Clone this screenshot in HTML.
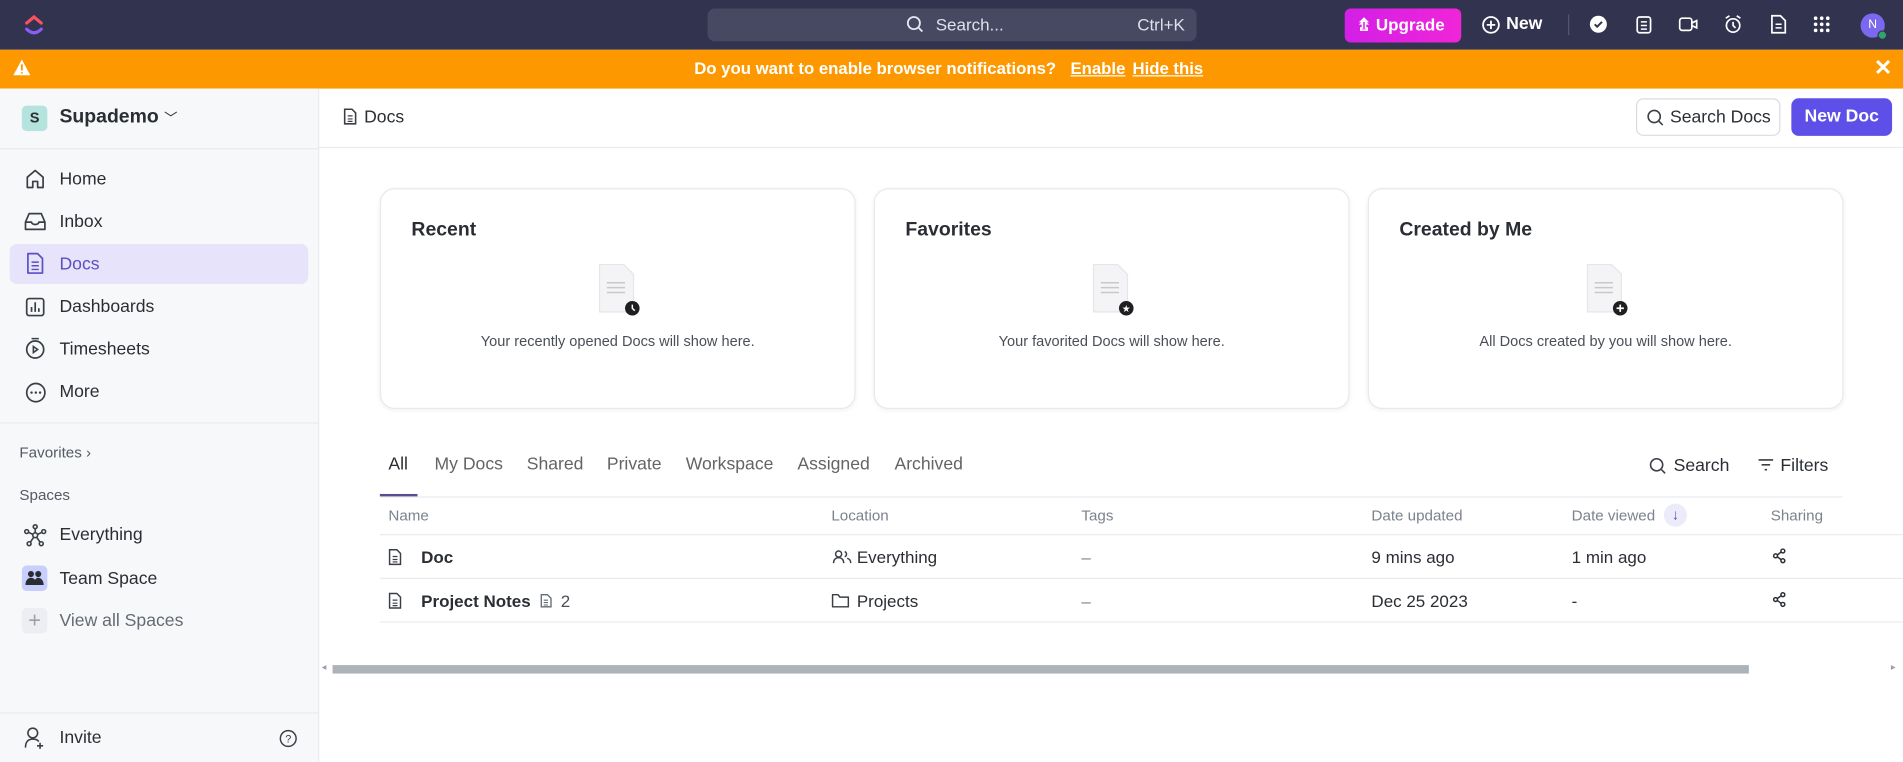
<!DOCTYPE html>
<html><head><meta charset="utf-8"><style>
html,body{margin:0;padding:0;width:1903px;height:762px;overflow:hidden;background:#fff}
#s{position:absolute;left:0;top:0;width:1568px;height:628px;transform:scale(1.21365);transform-origin:0 0;font-family:"Liberation Sans",sans-serif;color:#2a2e34}
.a{position:absolute;white-space:nowrap}
svg{position:absolute;overflow:visible}
.nav{font-size:14.5px;color:#2a2e34}
.tab{font-size:14.5px;color:#646464;top:375px}
.th{font-size:12.5px;color:#7c828d;top:418px}
.td{font-size:14px;color:#2a2e34}
.card{position:absolute;top:155px;width:390px;height:180px;border:1px solid #e8e9ed;border-radius:12px;box-shadow:0 1px 4px rgba(0,0,0,.06);background:#fff}
.card .t{position:absolute;left:25px;top:25px;font-size:16px;font-weight:bold;color:#2a2e34}
.card .d{position:absolute;left:0;right:0;top:118px;text-align:center;font-size:12px;color:#4a4f57}
.hl{position:absolute;height:1px;background:#e9ebf0}
</style></head><body><div id="s">
<div class="a" style="left:0;top:0;width:1568px;height:41px;background:#32334f"></div>
<svg style="left:20px;top:11px" width="16" height="20" viewBox="0 0 16 20"><path d="M2 8 L8 3 L14 8" stroke="#f7525f" stroke-width="2.6" fill="none" stroke-linecap="round"/><path d="M2 13 Q8 19 14 13" stroke="#8b5cf6" stroke-width="2.6" fill="none" stroke-linecap="round"/></svg>
<div class="a" style="left:583px;top:7px;width:403px;height:27px;background:#474862;border-radius:6px"></div>
<svg style="left:747px;top:13px" width="14" height="14"><circle cx="6" cy="6" r="5" stroke="#e6e6ee" stroke-width="1.5" fill="none"/><path d="M10 10 L13 13" stroke="#e6e6ee" stroke-width="1.5"/></svg>
<div class="a" style="left:771px;top:12px;font-size:14px;color:#e0e0ea">Search...</div>
<div class="a" style="left:937px;top:12px;font-size:14px;color:#e0e0ea">Ctrl+K</div>
<div class="a" style="left:1108px;top:7px;width:96px;height:28px;background:linear-gradient(90deg,#d31fe6,#f025d8);border-radius:5px"></div>
<div class="a" style="left:1118px;top:12px;font-size:14px;color:#fff;font-weight:bold">⇯ Upgrade</div>
<svg style="left:1221px;top:13px" width="15" height="15"><circle cx="7.5" cy="7.5" r="6.5" stroke="#fff" stroke-width="1.5" fill="none"/><path d="M7.5 4v7M4 7.5h7" stroke="#fff" stroke-width="1.5"/></svg>
<div class="a" style="left:1241px;top:12px;font-size:14.5px;color:#fff;font-weight:bold">New</div>
<div class="a" style="left:1292px;top:12px;width:1px;height:17px;background:#55576f"></div>
<svg style="left:1310px;top:13px" width="15" height="15"><circle cx="7" cy="7" r="7" fill="#fff"/><path d="M4 7l2 2 4-4" stroke="#32334f" stroke-width="1.6" fill="none"/></svg>
<svg style="left:1348px;top:12px" width="13" height="16"><rect x="1" y="2" width="11" height="13" rx="2" stroke="#fff" stroke-width="1.4" fill="none"/><path d="M4 6h5M4 9h5M4 12h5" stroke="#fff" stroke-width="1.2"/></svg>
<svg style="left:1383px;top:14px" width="16" height="12"><rect x="1" y="1" width="10" height="10" rx="2" stroke="#fff" stroke-width="1.4" fill="none"/><path d="M11 5l4-2v6l-4-2" stroke="#fff" stroke-width="1.4" fill="none"/></svg>
<svg style="left:1420px;top:12px" width="16" height="16"><circle cx="8" cy="9" r="5.5" stroke="#fff" stroke-width="1.4" fill="none"/><path d="M8 6v3l2 2M2 3l3-2M14 3l-3-2" stroke="#fff" stroke-width="1.4" fill="none"/></svg>
<svg style="left:1459px;top:12px" width="13" height="16"><path d="M1 1h7l4 4v10H1z" stroke="#fff" stroke-width="1.4" fill="none"/><path d="M4 8h5M4 11h5" stroke="#fff" stroke-width="1.2"/></svg>
<svg style="left:1494px;top:13px" width="14" height="14" fill="#fff"><circle cx="2" cy="2" r="1.5"/><circle cx="7" cy="2" r="1.5"/><circle cx="12" cy="2" r="1.5"/><circle cx="2" cy="7" r="1.5"/><circle cx="7" cy="7" r="1.5"/><circle cx="12" cy="7" r="1.5"/><circle cx="2" cy="12" r="1.5"/><circle cx="7" cy="12" r="1.5"/><circle cx="12" cy="12" r="1.5"/></svg>
<div class="a" style="left:1533px;top:11px;width:20px;height:20px;border-radius:50%;background:#7b68ee;color:#fff;font-size:10px;text-align:center;line-height:20px">N</div>
<div class="a" style="left:1547px;top:25px;width:6px;height:6px;border-radius:50%;background:#2ea56a;border:1px solid #32334f"></div>
<div class="a" style="left:0;top:41px;width:1568px;height:32px;background:#fd9800"></div>
<svg style="left:11px;top:49px" width="14" height="13"><path d="M7 0L14 13H0z" fill="#fff"/><path d="M7 4v5M7 10.5v1.2" stroke="#fd9800" stroke-width="1.6"/></svg>
<div class="a" style="left:572px;top:49px;font-size:13.8px;color:#fff;font-weight:bold">Do you want to enable browser notifications? <span style="margin-left:8px;text-decoration:underline">Enable</span> <span style="margin-left:2px;text-decoration:underline">Hide this</span></div>
<div class="a" style="left:1544px;top:46px;font-size:18px;color:#fff;font-weight:bold">✕</div>
<div class="a" style="left:0;top:73px;width:262px;height:555px;background:#f7f8f9;border-right:1px solid #e9ebf0"></div>
<div class="hl" style="left:0;top:122px;width:262px"></div>
<div class="a" style="left:18px;top:87px;width:21px;height:21px;background:#b5e3dd;border-radius:4px;font-size:12px;font-weight:bold;text-align:center;line-height:21px;color:#2a2e34">S</div>
<div class="a" style="left:49px;top:88px;font-size:16px;font-weight:bold">Supademo <span style="font-size:11px;font-weight:normal">﹀</span></div>
<div class="a" style="left:8px;top:201px;width:246px;height:33px;background:#e6e3fb;border-radius:6px"></div>
<svg style="left:21px;top:139px" width="16" height="17"><path d="M1.5 7L8 1.5 14.5 7v8.5h-4.5v-5h-4v5H1.5z" stroke="#3a3e46" stroke-width="1.4" fill="none" stroke-linejoin="round"/></svg>
<div class="a nav" style="left:49px;top:140px">Home</div>
<svg style="left:20px;top:175px" width="18" height="15"><path d="M1 8l3-7h10l3 7v6H1z M1 8h5a3 2 0 0 0 6 0h5" stroke="#3a3e46" stroke-width="1.4" fill="none" stroke-linejoin="round"/></svg>
<div class="a nav" style="left:49px;top:175px">Inbox</div>
<svg style="left:22px;top:208px" width="14" height="18"><path d="M1 1h8l4 4v12H1z" stroke="#5b4fc4" stroke-width="1.4" fill="none" stroke-linejoin="round"/><path d="M4 8h6M4 11h6M4 14h6" stroke="#5b4fc4" stroke-width="1.2"/></svg>
<div class="a nav" style="left:49px;top:210px;color:#5b4fc4">Docs</div>
<svg style="left:21px;top:245px" width="16" height="16"><rect x="1" y="1" width="14" height="14" rx="2" stroke="#3a3e46" stroke-width="1.4" fill="none"/><path d="M5 12V8M8 12V4M11 12V9" stroke="#3a3e46" stroke-width="1.4"/></svg>
<div class="a nav" style="left:49px;top:245px">Dashboards</div>
<svg style="left:21px;top:278px" width="16" height="18"><circle cx="8" cy="10" r="7" stroke="#3a3e46" stroke-width="1.4" fill="none"/><path d="M5 1h6M6.5 7.5l3.5 2.5-3.5 2.5z" stroke="#3a3e46" stroke-width="1.3" fill="none"/></svg>
<div class="a nav" style="left:49px;top:280px">Timesheets</div>
<svg style="left:21px;top:315px" width="17" height="17"><circle cx="8.5" cy="8.5" r="7.5" stroke="#3a3e46" stroke-width="1.4" fill="none"/><circle cx="5" cy="8.5" r="1" fill="#3a3e46"/><circle cx="8.5" cy="8.5" r="1" fill="#3a3e46"/><circle cx="12" cy="8.5" r="1" fill="#3a3e46"/></svg>
<div class="a nav" style="left:49px;top:315px">More</div>
<div class="hl" style="left:0;top:348px;width:262px"></div>
<div class="a" style="left:16px;top:366px;font-size:12.5px;color:#545a64">Favorites ›</div>
<div class="a" style="left:16px;top:401px;font-size:12.5px;color:#545a64">Spaces</div>
<svg style="left:20px;top:432px" width="18" height="18"><g stroke="#3a3e46" stroke-width="1.3" fill="none"><circle cx="9" cy="9" r="2"/><circle cx="9" cy="2" r="1.6"/><circle cx="2" cy="6" r="1.6"/><circle cx="16" cy="6" r="1.6"/><circle cx="4" cy="16" r="1.6"/><circle cx="14" cy="16" r="1.6"/><path d="M9 3.6V7M3.5 6.6L7 8.3M14.5 6.6L11 8.3M5 14.7l2.7-4M13 14.7l-2.7-4"/></g></svg>
<div class="a nav" style="left:49px;top:433px">Everything</div>
<div class="a" style="left:18px;top:466px;width:21px;height:21px;background:#c9cffd;border-radius:4px"></div>
<svg style="left:21px;top:470px" width="15" height="13" fill="#2a2e34"><circle cx="4.5" cy="3" r="2.5"/><circle cx="10.5" cy="3" r="2.5"/><path d="M0 12c0-4 2-6 4.5-6s4.5 2 4.5 6zM7 12c0-4 1.5-6 3.5-6S15 8 15 12z"/></svg>
<div class="a nav" style="left:49px;top:469px">Team Space</div>
<div class="a" style="left:18px;top:501px;width:21px;height:21px;background:#eceef1;border-radius:4px;color:#9aa0a8;font-size:18px;text-align:center;line-height:20px">+</div>
<div class="a nav" style="left:49px;top:504px;color:#646a73">View all Spaces</div>
<div class="hl" style="left:0;top:587px;width:262px"></div>
<svg style="left:20px;top:599px" width="18" height="18"><circle cx="7" cy="5" r="4" stroke="#3a3e46" stroke-width="1.3" fill="none"/><path d="M1 17c0-5 2.5-7 6-7s4 1 5 2M13 13v5M10.5 15.5h5" stroke="#3a3e46" stroke-width="1.3" fill="none"/></svg>
<div class="a nav" style="left:49px;top:600px">Invite</div>
<svg style="left:230px;top:601px" width="15" height="15"><circle cx="7.5" cy="7.5" r="6.5" stroke="#3a3e46" stroke-width="1.2" fill="none"/><text x="7.5" y="11" font-size="9" text-anchor="middle" fill="#3a3e46" font-family="Liberation Sans">?</text></svg>
<div class="hl" style="left:263px;top:121px;width:1305px"></div>
<svg style="left:283px;top:89px" width="11" height="14"><path d="M1 1h6l3 3v9H1z" stroke="#3a3e46" stroke-width="1.3" fill="none"/><path d="M3.5 6.5h4M3.5 9h4M3.5 11h4" stroke="#3a3e46" stroke-width="1"/></svg>
<div class="a" style="left:300px;top:89px;font-size:14.5px;color:#2a2e34">Docs</div>
<div class="a" style="left:1348px;top:81px;width:119px;height:31px;border:1px solid #d9dbe0;border-radius:6px;box-sizing:border-box"></div>
<svg style="left:1357px;top:90px" width="14" height="14"><circle cx="6" cy="6" r="5" stroke="#3a3e46" stroke-width="1.3" fill="none"/><path d="M10 10l3 3" stroke="#3a3e46" stroke-width="1.3"/></svg>
<div class="a" style="left:1376px;top:89px;font-size:14.5px;color:#2a2e34">Search Docs</div>
<div class="a" style="left:1476px;top:81px;width:83px;height:31px;background:#5d4fe8;border-radius:6px;color:#fff;font-size:14.5px;font-weight:bold;text-align:center;line-height:31px">New Doc</div>
<div class="card" style="left:313px"><div class="t">Recent</div><div class="d">Your recently opened Docs will show here.</div></div>
<div class="card" style="left:720px"><div class="t">Favorites</div><div class="d">Your favorited Docs will show here.</div></div>
<div class="card" style="left:1127px"><div class="t">Created by Me</div><div class="d">All Docs created by you will show here.</div></div>
<svg style="left:493px;top:217px" width="36" height="46"><path d="M1 1h20l8 8v31H1z" fill="#f4f4f6" stroke="#e6e6ea"/><path d="M7 16h15M7 20h15M7 24h15" stroke="#c8c8cc" stroke-width="1.2"/><circle cx="28" cy="37" r="6" fill="#1f1f22"/><path d="M28 34v3l2 2" stroke="#fff" stroke-width="1.2" fill="none"/></svg>
<svg style="left:900px;top:217px" width="36" height="46"><path d="M1 1h20l8 8v31H1z" fill="#f4f4f6" stroke="#e6e6ea"/><path d="M7 16h15M7 20h15M7 24h15" stroke="#c8c8cc" stroke-width="1.2"/><circle cx="28" cy="37" r="6" fill="#1f1f22"/><text x="28" y="40" font-size="8" fill="#fff" text-anchor="middle" font-family="DejaVu Sans">★</text></svg>
<svg style="left:1307px;top:217px" width="36" height="46"><path d="M1 1h20l8 8v31H1z" fill="#f4f4f6" stroke="#e6e6ea"/><path d="M7 16h15M7 20h15M7 24h15" stroke="#c8c8cc" stroke-width="1.2"/><circle cx="28" cy="37" r="6" fill="#1f1f22"/><path d="M28 34v6M25 37h6" stroke="#fff" stroke-width="1.4"/></svg>
<div class="a tab" style="left:320px;color:#2a2e34">All</div>
<div class="a tab" style="left:358px">My Docs</div>
<div class="a tab" style="left:434px">Shared</div>
<div class="a tab" style="left:500px">Private</div>
<div class="a tab" style="left:565px">Workspace</div>
<div class="a tab" style="left:657px">Assigned</div>
<div class="a tab" style="left:737px">Archived</div>
<svg style="left:1359px;top:377px" width="14" height="14"><circle cx="6" cy="6" r="5" stroke="#3a3e46" stroke-width="1.3" fill="none"/><path d="M10 10l3 3" stroke="#3a3e46" stroke-width="1.3"/></svg>
<div class="a" style="left:1379px;top:376px;font-size:14.5px;color:#2a2e34">Search</div>
<svg style="left:1448px;top:378px" width="14" height="11"><path d="M1 1h12M3.5 5h7M6 9h2" stroke="#3a3e46" stroke-width="1.3"/></svg>
<div class="a" style="left:1467px;top:376px;font-size:14.5px;color:#2a2e34">Filters</div>
<div class="hl" style="left:313px;top:409px;width:1205px"></div>
<div class="a" style="left:313px;top:407px;width:31px;height:2px;background:#574e92"></div>
<div class="a th" style="left:320px">Name</div>
<div class="a th" style="left:685px">Location</div>
<div class="a th" style="left:891px">Tags</div>
<div class="a th" style="left:1130px">Date updated</div>
<div class="a th" style="left:1295px">Date viewed</div>
<div class="a" style="left:1371px;top:415px;width:19px;height:19px;border-radius:50%;background:#ecebfa;color:#5b4fc4;font-size:12px;text-align:center;line-height:19px">↓</div>
<div class="a th" style="left:1459px">Sharing</div>
<div class="hl" style="left:313px;top:440px;width:1255px"></div>
<div class="hl" style="left:313px;top:476px;width:1255px"></div>
<div class="hl" style="left:313px;top:512px;width:1255px"></div>
<svg style="left:320px;top:452px" width="11" height="14"><path d="M1 1h6l3 3v9H1z" stroke="#3a3e46" stroke-width="1.2" fill="none"/><path d="M3.5 6.5h4M3.5 9h4M3.5 11h4" stroke="#3a3e46" stroke-width="1"/></svg>
<div class="a td" style="left:347px;top:451px;font-weight:bold">Doc</div>
<svg style="left:686px;top:453px" width="16" height="12"><circle cx="5" cy="3.5" r="2.5" stroke="#3a3e46" stroke-width="1.2" fill="none"/><path d="M0.8 11c0-3 2-4.5 4.2-4.5S9.2 8 9.2 11M10 1.5a2.3 2.3 0 0 1 0 4.3M12 7c2 .5 3 2 3 4" stroke="#3a3e46" stroke-width="1.2" fill="none"/></svg>
<div class="a td" style="left:706px;top:451px">Everything</div>
<div class="a td" style="left:891px;top:451px;color:#7c828d">–</div>
<div class="a td" style="left:1130px;top:451px">9 mins ago</div>
<div class="a td" style="left:1295px;top:451px">1 min ago</div>
<svg style="left:1461px;top:452px" width="10" height="12"><g stroke="#2a2e34" stroke-width="1.2" fill="none"><circle cx="8" cy="2" r="1.6"/><circle cx="2" cy="6" r="1.6"/><circle cx="8" cy="10" r="1.6"/><path d="M3.5 5.2l3-2.3M3.5 6.8l3 2.3"/></g></svg>
<svg style="left:320px;top:488px" width="11" height="14"><path d="M1 1h6l3 3v9H1z" stroke="#3a3e46" stroke-width="1.2" fill="none"/><path d="M3.5 6.5h4M3.5 9h4M3.5 11h4" stroke="#3a3e46" stroke-width="1"/></svg>
<div class="a td" style="left:347px;top:487px;font-weight:bold">Project Notes</div>
<svg style="left:445px;top:489px" width="10" height="12"><path d="M1 1h5l3 3v7H1z" stroke="#646a73" stroke-width="1.1" fill="none"/><path d="M3 5.5h3.5M3 7.5h3.5M3 9.5h3.5" stroke="#646a73" stroke-width=".9"/></svg>
<div class="a td" style="left:462px;top:487px;color:#4a4f57">2</div>
<svg style="left:685px;top:489px" width="15" height="12"><path d="M1 1h4.5l1.5 2H14v8H1z" stroke="#3a3e46" stroke-width="1.2" fill="none" stroke-linejoin="round"/></svg>
<div class="a td" style="left:706px;top:487px">Projects</div>
<div class="a td" style="left:891px;top:487px;color:#7c828d">–</div>
<div class="a td" style="left:1130px;top:487px">Dec 25 2023</div>
<div class="a td" style="left:1295px;top:487px">-</div>
<svg style="left:1461px;top:488px" width="10" height="12"><g stroke="#2a2e34" stroke-width="1.2" fill="none"><circle cx="8" cy="2" r="1.6"/><circle cx="2" cy="6" r="1.6"/><circle cx="8" cy="10" r="1.6"/><path d="M3.5 5.2l3-2.3M3.5 6.8l3 2.3"/></g></svg>
<div class="a" style="left:274px;top:548px;width:1167px;height:7px;background:#aeb3ba"></div>
<div class="a" style="left:265px;top:545px;font-size:8px;color:#9aa0a8">◂</div>
<div class="a" style="left:1558px;top:545px;font-size:8px;color:#9aa0a8">▸</div>
</div></body></html>
